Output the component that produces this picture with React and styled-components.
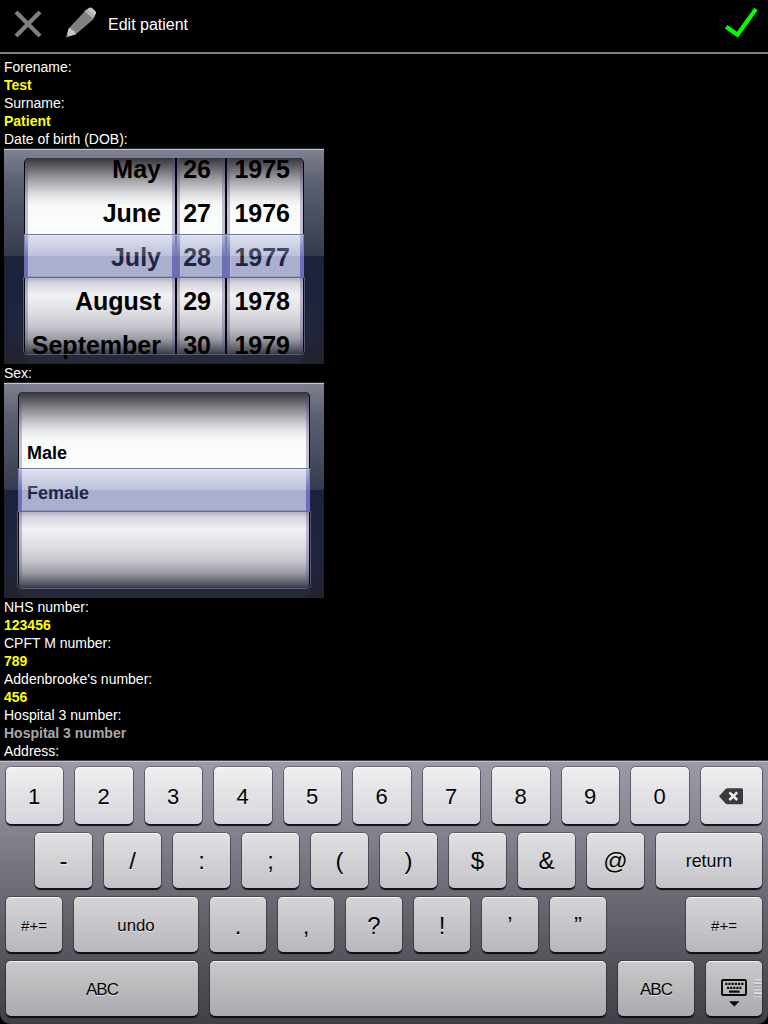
import React from "react";
import styled, { createGlobalStyle } from "styled-components";

const Global = createGlobalStyle`
  * { box-sizing: border-box; }
  body { margin: 0; background: #000; font-family: "Liberation Sans", Arial, sans-serif; }
`;

const Screen = styled.div`
  width: 768px;
  height: 1024px;
  background: #000;
  overflow: hidden;
  display: flex;
  flex-direction: column;
`;

const Header = styled.header`
  height: 54px;
  flex: none;
  display: flex;
  align-items: center;
  border-bottom: 2px solid #808080;
  padding: 0 9px 0 12px;
`;

const Title = styled.h1`
  margin: 0 auto 2px 8px;
  font-size: 16px;
  line-height: 18px;
  font-weight: 400;
  color: #fff;
`;

const Icon = styled.svg`
  display: block;
  flex: none;
  margin-right: ${(p) => p.$gap || 0}px;
`;

const Form = styled.main`
  height: 706px;
  flex: none;
  padding: 4px 4px 0;
  font-size: 14px;
  line-height: 18px;
`;

const Label = styled.div`
  color: #fff;
`;

const Value = styled.div`
  color: ${(p) => (p.$empty ? "#a9a9a9" : "#ff0")};
  font-weight: 700;
`;

const Picker = styled.div`
  width: 320px;
  height: 216px;
  position: relative;
  overflow: hidden;
  display: flex;
  justify-content: center;
  padding-top: 10px;
  background: linear-gradient(
    #242631 0, #242631 1px, #c4c7d0 1px, #c4c7d0 2px, #7f828e 2px, #5d6273 32px,
    #4c5163 64px, #353a4e 108px, #1d223c 108px, #20253e 180px, #202329 216px);
`;

const Drum = styled.div`
  display: flex;
  gap: 2px;
  width: ${(p) => p.$width}px;
  height: 197px;
  padding: 0 1px;
  border-radius: 5px;
  background: #08080c;
  box-shadow: 0 -8px 0 rgba(128, 126, 152, 0.4), 0 9px 0 rgba(46, 48, 72, 0.45);
`;

const Column = styled.div`
  width: ${(p) => p.$width}px;
  display: flex;
  flex-direction: column;
  flex: none;
  padding: 0 ${(p) => p.$right || 5}px 0 ${(p) => p.$left || 0}px;
  background:
    linear-gradient(90deg, rgba(82, 74, 134, 0.34) 3px, transparent 3px, transparent calc(100% - 3px), rgba(82, 74, 134, 0.34) calc(100% - 3px)),
    linear-gradient(#35353b 0, #56565b 7px, #89898e 17px, #bcbcc0 28px, #e4e4e6 38px, #f8faf9 48px, #fdfdfd 76px, #fdfdfd 118px,
      #a9a9bd 119px, #d4d4dc 125px, #f2f2f5 137px, #e1e1e5 152px, #c5c5cd 169px, #9b9ba4 181px, #5d5d68 191px, #32323d 197px);
  &:first-child { border-radius: 5px 0 0 5px; }
  &:last-child { border-radius: 0 5px 5px 0; }
  &:only-child { border-radius: 5px; }
`;

const Wheel = styled.div`
  margin-top: ${(p) => p.$top}px;
  font-size: ${(p) => p.$font}px;
  line-height: ${(p) => p.$pitch}px;
  font-weight: 700;
  color: #000;
  text-align: ${(p) => p.$align || "left"};
  white-space: nowrap;
`;

const Band = styled.div`
  position: absolute;
  top: 86px;
  left: 50%;
  transform: translateX(-50%);
  width: ${(p) => p.$width}px;
  height: 44px;
  padding: 0 1px;
  display: flex;
  gap: 2px;
  border-top: 1px solid #70779a;
  border-bottom: 1px solid #626a88;
  background: linear-gradient(rgba(184, 188, 220, 0.44), rgba(125, 135, 185, 0.5) 21px, rgba(68, 80, 148, 0.45) 21px);
  box-shadow: inset 0 1px 0 rgba(235, 238, 250, 0.7);
`;

const BandCell = styled.div`
  width: ${(p) => p.$width}px;
  flex: none;
  border: 3px solid transparent;
  border-width: 0 3px;
  border-image: linear-gradient(rgba(176, 178, 214, 0.8), rgba(104, 106, 190, 0.9) 55%) 0 3;
  box-shadow: inset 1px 0 0 rgba(200, 205, 240, 0.3), 1px 0 0 rgba(140, 144, 205, 0.7), -1px 0 0 rgba(140, 144, 205, 0.7);
`;

const DrumFrame = styled.div`
  position: absolute;
  top: 129px;
  left: 50%;
  transform: translateX(-50%);
  width: ${(p) => p.$width + 2}px;
  height: 78px;
  border: 1px solid #555b70;
  border-top: 0;
  border-radius: 0 0 5px 5px;
`;

const Keyboard = styled.section`
  height: 264px;
  flex: none;
  display: flex;
  flex-direction: column;
  gap: 9px;
  padding: 6px 6px 0;
  border-top: 1px solid #45434b;
  border-radius: 0 0 11px 11px;
  background: linear-gradient(#c2c0c9 0, #c2c0c9 1px, #9d9aa8 1px, #8c8995 55px, #73727d 110px, #62626b 160px, #505059 210px, #404049 263px);
`;

const tones = {
  1: ["#efeff1", "#d5d5db"],
  2: ["#e1e1e3", "#c3c3c9"],
  3: ["#d6d6d8", "#b6b6bc"],
  4: ["#cacacc", "#aaaaaf"],
};

const KeyRow = styled.div`
  display: flex;
  gap: 12px;
  height: ${(p) => (p.$row === 1 ? 57 : 55)}px;
  padding-left: ${(p) => p.$indent || 0}px;
`;

const Key = styled.button`
  position: relative;
  flex: none;
  width: ${(p) => p.$width}px;
  height: 100%;
  margin: 0 0 0 ${(p) => (p.$push ? "auto" : 0)};
  padding: ${(p) => p.$drop || 0}px ${(p) => p.$nudge || 0}px 0 0;
  border: 0;
  border-radius: 5px;
  display: flex;
  align-items: center;
  justify-content: center;
  font-family: inherit;
  font-size: ${(p) => p.$font || 24}px;
  letter-spacing: ${(p) => p.$tight || 0}px;
  color: #050505;
  text-shadow: 0 1px 0 rgba(255, 255, 255, 0.6);
  background: linear-gradient(${(p) => tones[p.$row][0]}, ${(p) => tones[p.$row][1]});
  box-shadow: inset 0 1px 0 rgba(255, 255, 255, 0.75), 0 0 0 1px rgba(30, 30, 38, 0.42), 0 2px 1px rgba(0, 0, 0, 0.9);
`;

const Grip = styled.span`
  position: absolute;
  right: 0;
  top: 18px;
  width: 8px;
  height: 18px;
  background: repeating-linear-gradient(#d8d8da 0, #d8d8da 1.2px, #aeaeb2 1.8px, #a4a4a9 3.35px);
`;

const KeyIcon = styled.svg`
  display: block;
`;

const digits = ["1", "2", "3", "4", "5", "6", "7", "8", "9", "0"];
const symbols = ["-", "/", ":", ";", "(", ")", "$", "&", "@"];
const marks = [".", ",", "?", "!", "’", "”"];

function Spinner({ width, columns }) {
  return (
    <Picker>
      <Drum $width={width}>
        {columns.map((c, i) => (
          <Column key={i} $width={c.width} $left={c.left} $right={c.right}>
            <Wheel $top={c.top} $font={c.font} $pitch={c.pitch} $align={c.align}>
              {c.items.map((t) => (
                <div key={t}>{t}</div>
              ))}
            </Wheel>
          </Column>
        ))}
      </Drum>
      <DrumFrame $width={width} />
      <Band $width={width}>
        {columns.map((c, i) => (
          <BandCell key={i} $width={c.width} />
        ))}
      </Band>
    </Picker>
  );
}

const date = { font: 25, pitch: 44, top: -11, align: "right" };

export default function App() {
  return (
    <Screen>
      <Global />
      <Header>
        <Icon $gap={20} width="32" height="52" viewBox="12 0 32 52">
          <path d="M16 12L40 36M40 12L16 36" stroke="#808080" strokeWidth="4.2" />
        </Icon>
        <Icon $gap={0} width="36" height="52" viewBox="64 0 36 52">
          <path d="M68.6 28.4L84.6 11.6L93.4 19.2L75.6 34.6Z" fill="#808080" />
          <path d="M84.2 11.4L88.8 7.9Q90.6 6.8 92.6 8.5L95.4 11Q97 12.8 95.5 14.5L93 19Z" fill="#c4c4c4" />
          <path d="M84.6 10.8L93.3 18.7M86.5 9.5L94.5 16.8" stroke="#858585" strokeWidth=".8" />
          <path d="M68.5 28.6Q71.3 27.7 71.8 30.2Q75 29.6 75.6 34.5L66.2 37.3Z" fill="#c8c8c8" />
          <path d="M66 37.4l1.2-3 2 2.2z" fill="#808080" />
        </Icon>
        <Title>Edit patient</Title>
        <Icon width="36" height="52" viewBox="723 0 36 52">
          <path d="M726.2 26.8L737.4 34.8L756 9" fill="none" stroke="#0f0" strokeWidth="4.3" />
        </Icon>
      </Header>
      <Form>
        <Label>Forename:</Label>
        <Value>Test</Value>
        <Label>Surname:</Label>
        <Value>Patient</Value>
        <Label>Date of birth (DOB):</Label>
        <Spinner
          width={280}
          columns={[
            { ...date, width: 150, right: 14, items: ["May", "June", "July", "August", "September"] },
            { ...date, width: 48, right: 14, items: ["26", "27", "28", "29", "30"] },
            { ...date, width: 76, right: 13, items: ["1975", "1976", "1977", "1978", "1979"] },
          ]}
        />
        <Label>Sex:</Label>
        <Spinner
          width={292}
          columns={[{ width: 290, left: 8, top: 41, font: 18, pitch: 40, items: ["Male", "Female"] }]}
        />
        <Label>NHS number:</Label>
        <Value>123456</Value>
        <Label>CPFT M number:</Label>
        <Value>789</Value>
        <Label>Addenbrooke's number:</Label>
        <Value>456</Value>
        <Label>Hospital 3 number:</Label>
        <Value $empty>Hospital 3 number</Value>
        <Label>Address:</Label>
      </Form>
      <Keyboard>
        <KeyRow $row={1}>
          {digits.map((d, i) => (
            <Key key={d} $row={1} $width={i % 2 ? 58 : 57} $font={22} $drop={2} $nudge={1}>{d}</Key>
          ))}
          <Key $row={1} $width={61} $drop={1} $nudge={1} aria-label="Delete">
            <KeyIcon width="24" height="17" viewBox="0 0 24 17">
              <path d="M0 8.3L6.6 1Q7.4.2 8.6.2H22.5Q24 .2 24 1.7V14.7Q24 16.2 22.5 16.2H8.6Q7.4 16.2 6.6 15.4Z" fill="#3b3b3e" />
              <path d="M10.4 4.4l7.8 7.6M18.2 4.4l-7.8 7.6" stroke="#ececef" strokeWidth="2.5" />
            </KeyIcon>
          </Key>
        </KeyRow>
        <KeyRow $row={2} $indent={29}>
          {symbols.map((s) => (
            <Key key={s} $row={2} $width={57}>{s}</Key>
          ))}
          <Key $row={2} $width={106} $font={17.8} $drop={1}>return</Key>
        </KeyRow>
        <KeyRow $row={3}>
          <Key $row={3} $width={56} $font={15} $drop={2}>#+=</Key>
          <Key $row={3} $width={124} $font={16.8} $drop={2}>undo</Key>
          {marks.map((m) => (
            <Key key={m} $row={3} $width={56} $drop={2}>{m}</Key>
          ))}
          <Key $row={3} $width={76} $font={15} $drop={2} $push>#+=</Key>
        </KeyRow>
        <KeyRow $row={4}>
          <Key $row={4} $width={192} $font={17} $tight={-1} $drop={3}>ABC</Key>
          <Key $row={4} $width={396} aria-label="Space" />
          <Key $row={4} $width={76} $font={17} $tight={-1} $drop={3}>ABC</Key>
          <Key $row={4} $width={56} $drop={9} aria-label="Hide keyboard">
            <KeyIcon width="26" height="28" viewBox="0 0 26 28">
              <rect x="1" y="1" width="24" height="15" rx="1" fill="none" stroke="#0a0a0a" strokeWidth="1.9" />
              <path d="M4.2 4.9H22.5" stroke="#0a0a0a" strokeWidth="2.2" strokeDasharray="2.2 1" />
              <path d="M6 8.8H20.4" stroke="#0a0a0a" strokeWidth="2.2" strokeDasharray="2.2 .9" />
              <path d="M8 12.6H18.6" stroke="#0a0a0a" strokeWidth="2.2" />
              <path d="M8 22.2H18.6L13.3 27.4Z" fill="#0a0a0a" />
            </KeyIcon>
            <Grip />
          </Key>
        </KeyRow>
      </Keyboard>
    </Screen>
  );
}
